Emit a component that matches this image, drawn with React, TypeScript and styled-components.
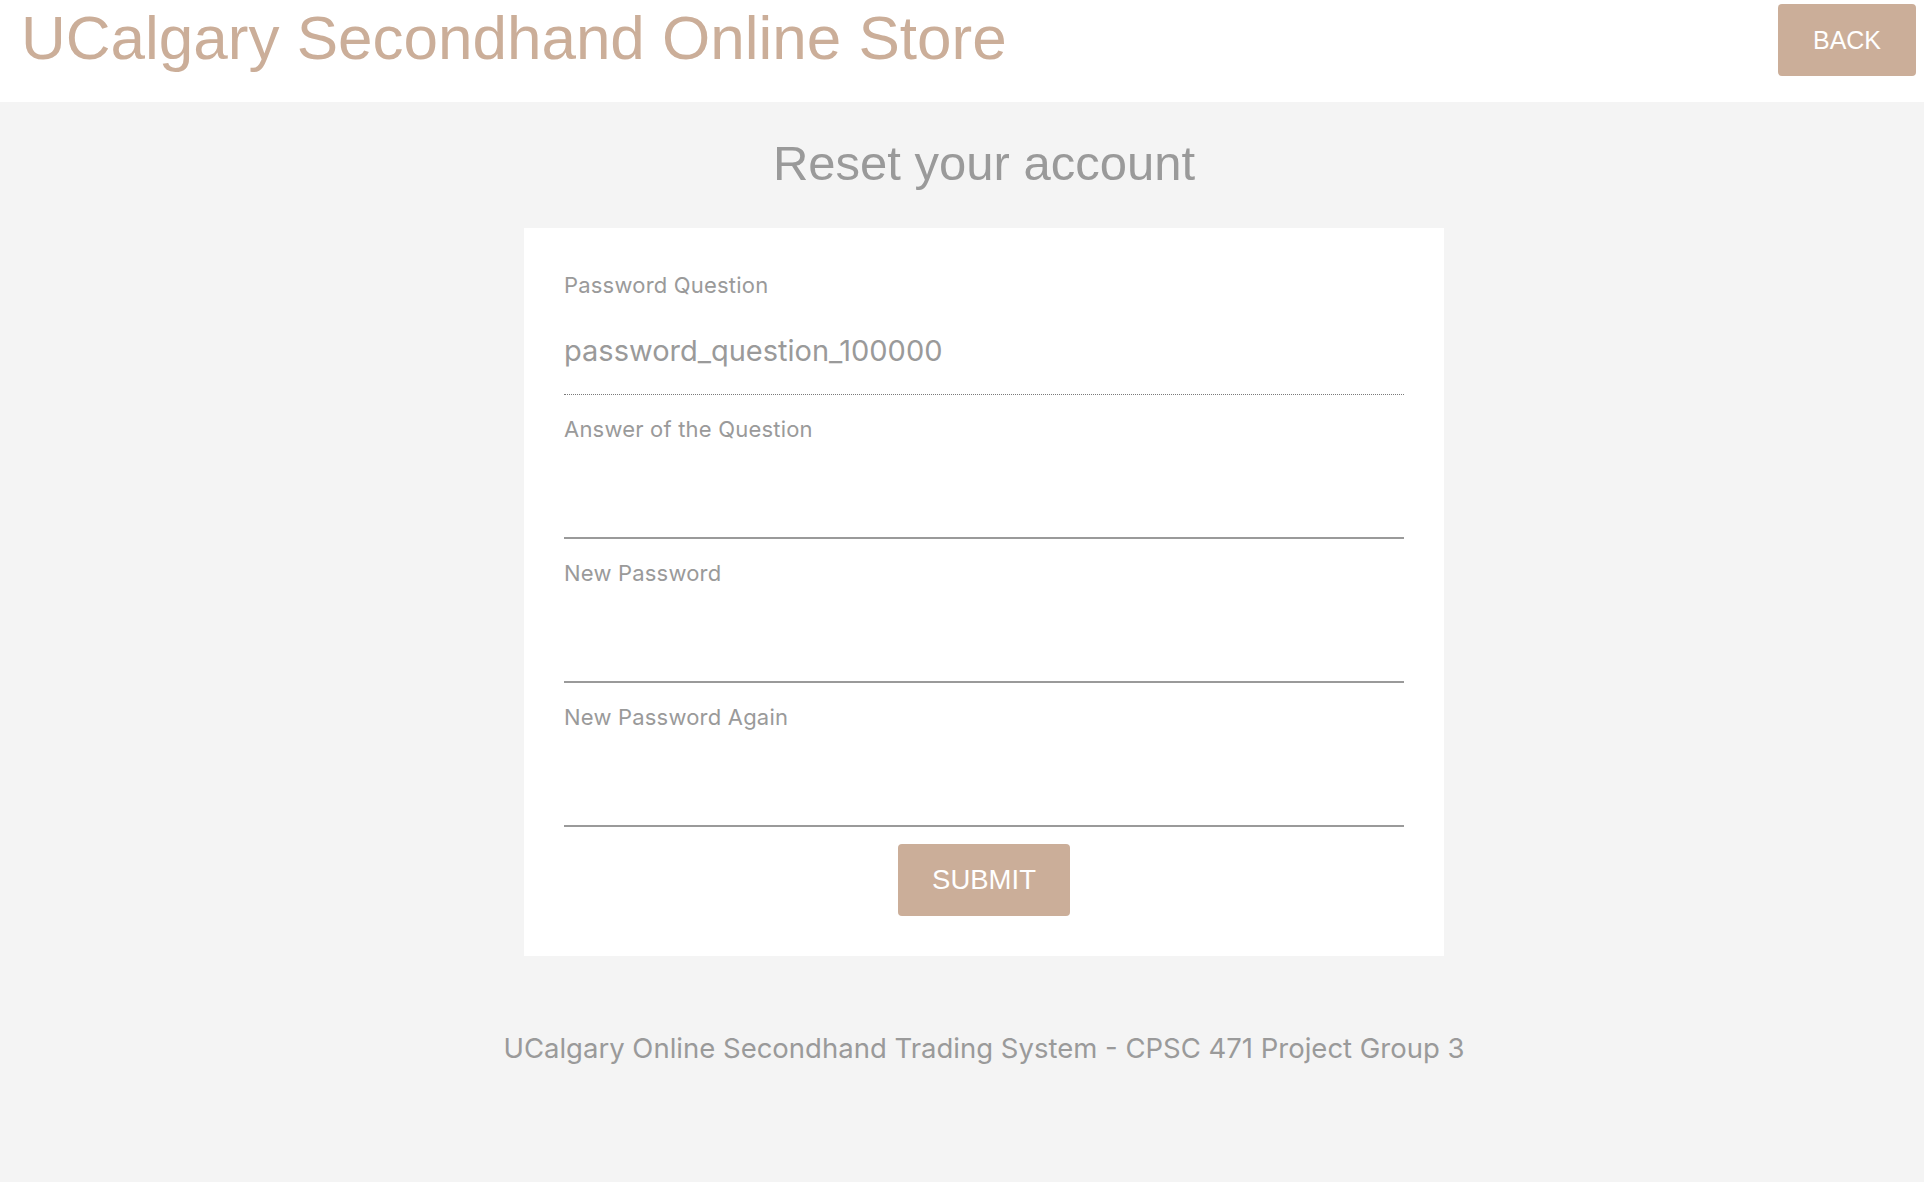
import styled, { createGlobalStyle } from "styled-components";

const tan = "#cbae99";
const grey = "#9a9a9a";

const GlobalStyle = createGlobalStyle`
  html, body {
    margin: 0;
    padding: 0;
    min-height: 100%;
    background: #f4f4f4;
  }

  body {
    font-family: "Liberation Sans", Arial, sans-serif;
  }

  #root {
    min-height: 100vh;
  }
`;

const Header = styled.header`
  height: 102px;
  background: #ffffff;
  display: flex;
  justify-content: space-between;
  align-items: flex-start;
`;

const Title = styled.h1`
  margin: 0;
  padding: 7px 0 0 21px;
  font-family: "Liberation Sans", Arial, sans-serif;
  font-size: 62px;
  font-weight: 400;
  line-height: 1;
  color: ${tan};
`;

const ActionButton = styled.button<{ $w: number; $size: number }>`
  width: ${({ $w }) => $w}px;
  height: 72px;
  border: none;
  border-radius: 4px;
  background: ${tan};
  color: #ffffff;
  font-family: "Liberation Sans", Arial, sans-serif;
  font-size: ${({ $size }) => $size}px;
  text-transform: uppercase;
  cursor: pointer;
  padding: 0;
`;

const BackButton = styled(ActionButton)`
  margin: 4px 8px 0 0;
`;

const SubmitButton = styled(ActionButton)`
  align-self: center;
  margin-top: 17px;
`;

const Main = styled.main`
  padding-left: 44px;
  display: flex;
  flex-direction: column;
  align-items: center;
`;

const Heading = styled.h2`
  margin: 37px 0 0;
  font-family: "Liberation Sans", Arial, sans-serif;
  font-size: 49px;
  font-weight: 400;
  line-height: 1;
  color: ${grey};
`;

const Card = styled.form`
  box-sizing: border-box;
  width: 920px;
  margin-top: 40px;
  padding: 46px 40px 40px;
  background: #ffffff;
  display: flex;
  flex-direction: column;
`;

const Field = styled.div`
  display: flex;
  flex-direction: column;

  & + & {
    margin-top: 23px;
  }
`;

const Label = styled.label`
  display: block;
  font-family: Inter, "Noto Sans", sans-serif;
  font-size: 22px;
  letter-spacing: 0.2px;
  line-height: 1;
  color: ${grey};
`;

const Input = styled.input<{ $locked?: boolean }>`
  box-sizing: content-box;
  height: 29px;
  margin: 40px 0 0;
  padding: ${({ $locked }) => ($locked ? "0 0 29px" : "0 0 28px")};
  border: none;
  border-bottom: ${({ $locked }) => ($locked ? "1px dotted #7a7a7a" : `2px solid ${grey}`)};
  outline: none;
  background: transparent;
  font-family: Inter, "Noto Sans", sans-serif;
  font-size: 29px;
  color: ${grey};
  -webkit-text-fill-color: ${grey};
  opacity: 1;
`;

const Footer = styled.footer`
  margin-top: 79px;
  font-family: Inter, "Noto Sans", sans-serif;
  font-size: 27.5px;
  line-height: 1;
  color: ${grey};
`;

const fields = [
  { id: "answer", label: "Answer of the Question", type: "text" },
  { id: "newPassword", label: "New Password", type: "password" },
  { id: "newPasswordAgain", label: "New Password Again", type: "password" },
];

const App = () => {
  return (
    <>
      <GlobalStyle />
      <Header>
        <Title>UCalgary Secondhand Online Store</Title>
        <BackButton type="button" $w={138} $size={25}>
          Back
        </BackButton>
      </Header>

      <Main>
        <Heading>Reset your account</Heading>

        <Card onSubmit={(e) => e.preventDefault()}>
          <Field>
            <Label htmlFor="question">Password Question</Label>
            <Input id="question" $locked disabled value="password_question_100000" readOnly />
          </Field>

          {fields.map((f) => (
            <Field key={f.id}>
              <Label htmlFor={f.id}>{f.label}</Label>
              <Input id={f.id} type={f.type} />
            </Field>
          ))}

          <SubmitButton type="submit" $w={172} $size={27.5}>
            Submit
          </SubmitButton>
        </Card>

        <Footer>UCalgary Online Secondhand Trading System - CPSC 471 Project Group 3</Footer>
      </Main>
    </>
  );
};

export default App;
